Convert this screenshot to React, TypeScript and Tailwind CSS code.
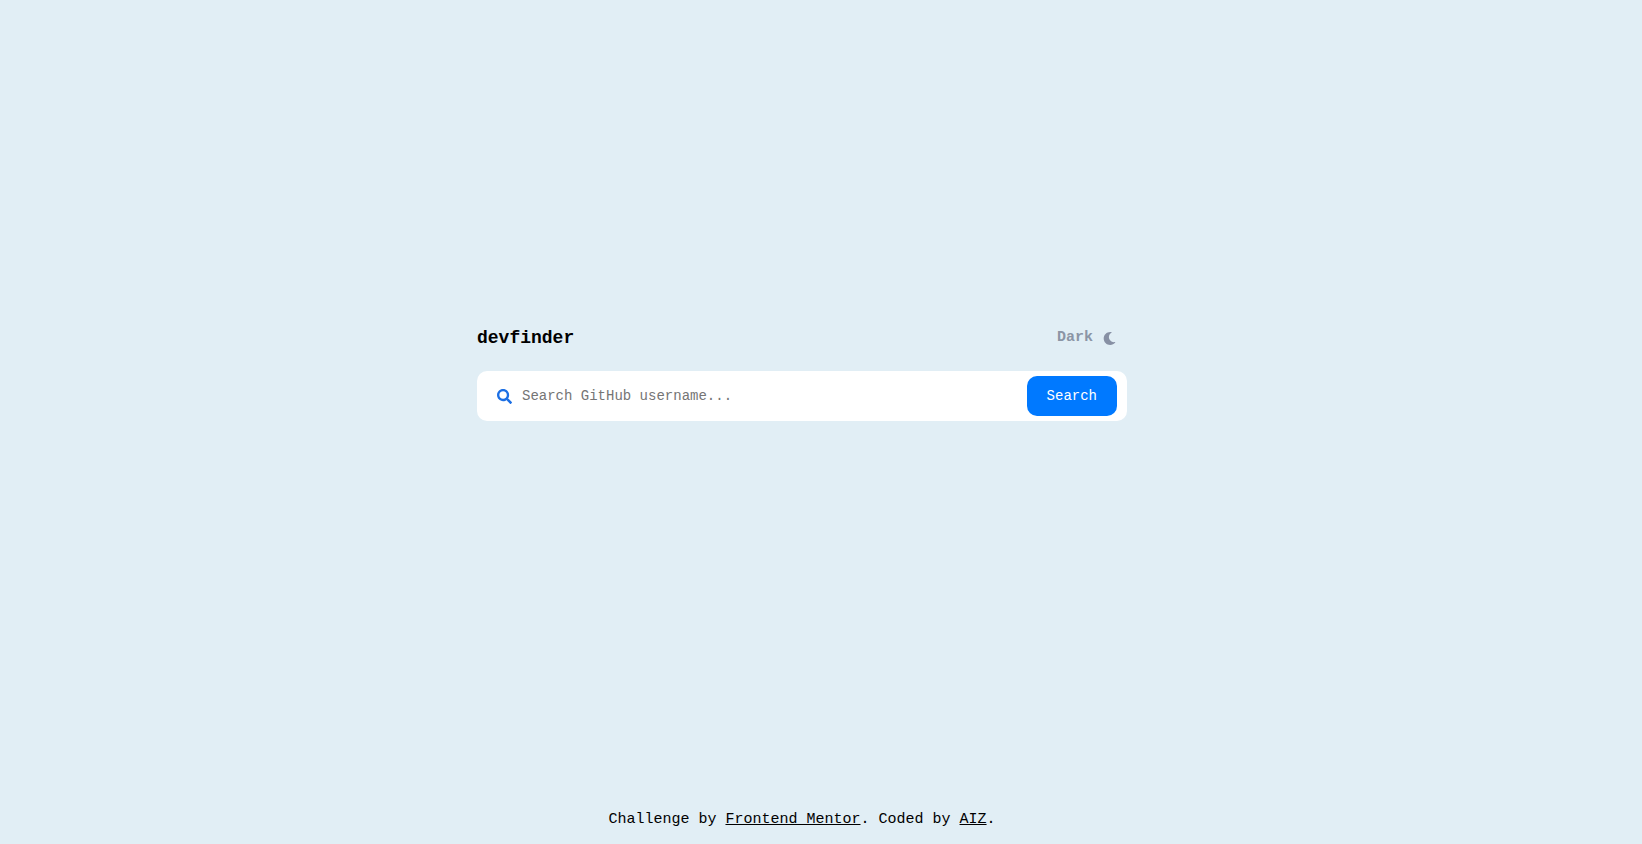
import { FaMoon, FaSearch } from "react-icons/fa";

export default function App() {
  return (
    <div className="flex min-h-screen flex-col bg-[#e1eef5] px-5 pr-[38px] font-['Liberation_Mono',monospace] text-black md:pl-0">
      <main className="mx-auto flex w-full max-w-[650px] flex-1 flex-col justify-center gap-5 pb-[62px]">
        <header className="flex h-[26px] items-center justify-between pr-[11px]">
          <h1 className="text-lg leading-6 font-bold">devfinder</h1>
          <button
            type="button"
            className="flex items-center gap-2.5 text-[15px] leading-6 font-bold text-[#8b95a5]"
          >
            Dark
            <FaMoon className="size-[13px] text-[#8790a4]" aria-hidden="true" />
          </button>
        </header>
        <form
          className="flex h-[50px] items-center rounded-[10px] bg-white pr-2.5 pl-5"
          onSubmit={(event) => event.preventDefault()}
        >
          <label htmlFor="username" aria-label="GitHub username">
            <FaSearch className="size-[15px] text-[#1c6fe4]" aria-hidden="true" />
          </label>
          <input
            id="username"
            type="text"
            placeholder="Search GitHub username..."
            className="h-10 min-w-0 flex-1 px-2.5 text-sm outline-none placeholder:text-[#757575]"
          />
          <button
            type="submit"
            className="h-10 rounded-[10px] bg-[#0079ff] px-5 text-sm text-white"
          >
            Search
          </button>
        </form>
      </main>
      <footer className="pb-3 text-center text-[15px] leading-6">
        Challenge by{" "}
        <a href="#frontend-mentor" className="underline">
          Frontend Mentor
        </a>
        . Coded by{" "}
        <a href="#aiz" className="underline">
          AIZ
        </a>
        .
      </footer>
    </div>
  );
}
